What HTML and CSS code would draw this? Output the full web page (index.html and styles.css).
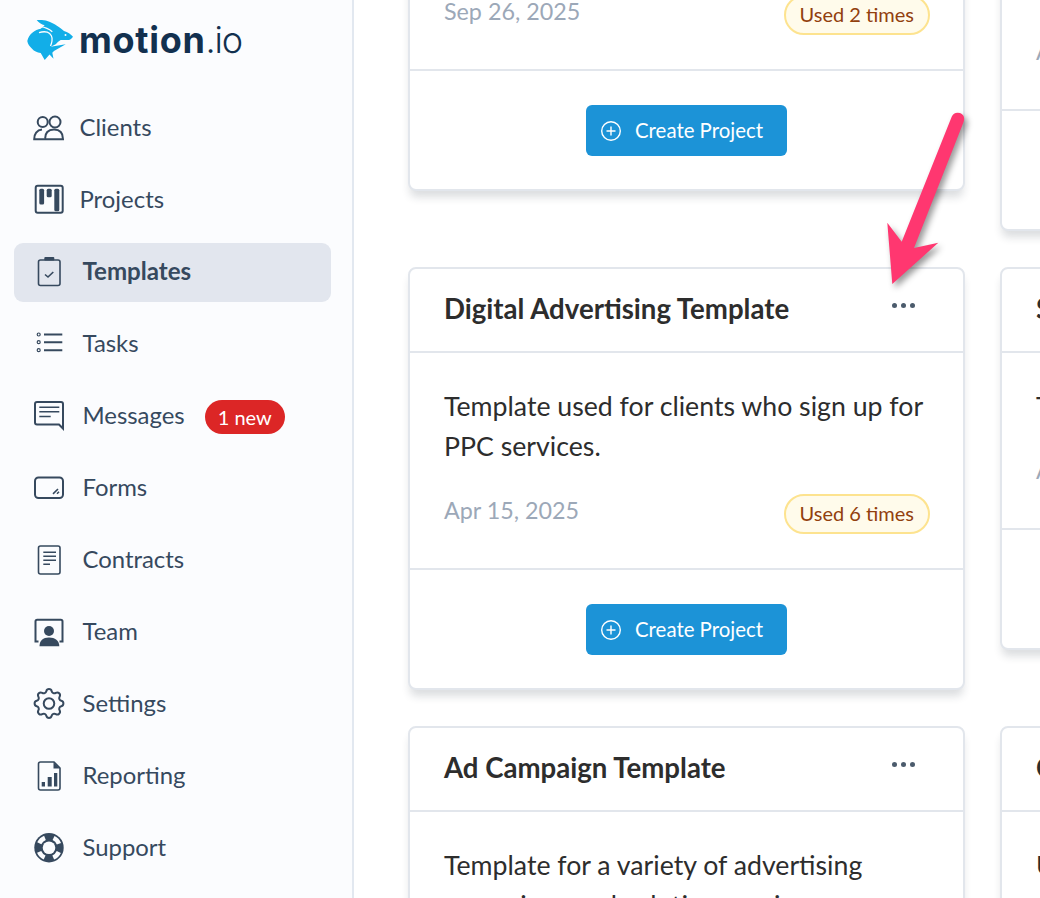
FILE: index.html
```html
<!DOCTYPE html>
<html lang="en">
<head>
    <meta charset="utf-8">
    <title>Templates</title>
    <link rel="stylesheet" href="styles.css">
</head>
<body>
<div class="app">
    <aside class="sidebar">
        <div class="logo">
            <svg class="logo-mark" width="47" height="41" viewBox="0 0 47 41">
                <path class="rabbit" d="M9.7 1C14 0.8 18 1 20.3 2C24 3 27.5 5 30.3 7C33 8.5 35 10.2 37 12C40.5 13 44 15.2 46 17.7C45 19.3 43.7 20.5 42 21L33.7 21C31.5 22 30 23.8 28.7 25.3L23.7 27.7L38.7 25.3L27 32L25.3 33.7L26.5 39.7L22.5 35.5L17.7 41L13.7 34C10 33.5 7 32 5.3 30C2.5 27.5 0.8 25 0.3 22C1 18.5 3 15.5 5.3 13.7C8 11.5 11 10.2 13.7 9.7L17.7 6.3C14.5 5.5 11.5 3.5 9.7 1Z"/>
                <path class="rabbit-line" d="M13.7 7.7C17.5 8.2 22 10 25.3 12.7"/>
                <path class="rabbit-line" d="M12 13.7C15 12.7 18 12.5 20.3 13.2C24 14.5 25.8 18.5 25 22C24.7 24 24.2 25.5 23.5 27"/>
                <circle class="rabbit-eye" cx="38.5" cy="16" r="1"/>
            </svg>
            <span class="logo-text">motion<span class="logo-io">.io</span></span>
        </div>
        <nav class="nav">
            <a class="nav-item nav-item-tight">
                <svg class="nav-icon" viewBox="0 0 30 30"><circle cx="8.7" cy="9" r="5"/><circle cx="21" cy="9" r="5.5"/><path d="M11 26.2H1.2C1 21 4 17 9 16.6M12 26.2C12 20 15.5 16.6 21 16.6S30 20 30 26.2Z" transform="translate(-1 0)"/></svg>
                <span>Clients</span>
            </a>
            <a class="nav-item nav-item-tight">
                <svg class="nav-icon" viewBox="0 0 30 30"><rect x="1.7" y="0.8" width="27" height="27" rx="2"/><rect class="solid" x="5.3" y="3.8" width="4.8" height="15.7" rx="1.5"/><rect class="solid" x="12.7" y="3.8" width="5" height="8.4" rx="1.5"/><rect class="solid" x="20.3" y="3.8" width="5" height="22.4" rx="1.5"/></svg>
                <span>Projects</span>
            </a>
            <a class="nav-item active">
                <svg class="nav-icon" viewBox="0 0 30 30"><rect class="thin" x="4.5" y="3" width="21.5" height="25.5" rx="2"/><rect class="solid" x="10.3" y="0" width="10" height="3.5" rx="1"/><path class="thin" d="M11 17.5L14 20L19.3 15"/></svg>
                <span>Templates</span>
            </a>
            <a class="nav-item">
                <svg class="nav-icon" viewBox="0 0 30 30"><circle class="hair" cx="4.7" cy="5.5" r="1.5"/><circle class="hair" cx="4.7" cy="13.2" r="1.5"/><circle class="hair" cx="4.7" cy="21.2" r="1.5"/><path d="M10 5.5H28.3M10 13.2H28.3M10 21.2H28.3"/></svg>
                <span>Tasks</span>
            </a>
            <a class="nav-item">
                <svg class="nav-icon" viewBox="0 0 30 30"><path d="M3 1H27Q29 1 29 3V27.5L25 23.5H3Q1 23.5 1 21.5V3Q1 1 3 1Z"/><path class="thin" d="M5.3 6.2H25.3M5.3 10.8H25.3M5.3 15.5H16.7"/></svg>
                <span>Messages</span>
                <span class="nav-badge">1 new</span>
            </a>
            <a class="nav-item">
                <svg class="nav-icon" viewBox="0 0 30 30"><rect x="1" y="4.5" width="28" height="20.5" rx="3.5"/><path class="thin" d="M19 20.8L24 16M23 20.8L25 18.8"/></svg>
                <span>Forms</span>
            </a>
            <a class="nav-item">
                <svg class="nav-icon" viewBox="0 0 30 30"><rect class="thin" x="4.5" y="1" width="21.5" height="28" rx="2"/><path class="thin" d="M9.3 7.2H22M9.3 11.2H22M9.3 15.2H22M9.3 19.2H16"/></svg>
                <span>Contracts</span>
            </a>
            <a class="nav-item">
                <svg class="nav-icon" viewBox="0 0 30 30"><path d="M4.5 24.5H1.5V4.5Q1.5 2.8 3.2 2.8H26.8Q28.5 2.8 28.5 4.5V24.5H25.5"/><circle class="solid" cx="15" cy="14" r="5"/><path class="solid" d="M5.5 29.2C5.5 24 9 20.6 15 20.6S25.3 24 25.3 29.2Z"/></svg>
                <span>Team</span>
            </a>
            <a class="nav-item">
                <svg class="nav-icon" viewBox="0 0 30 30"><g transform="translate(15 14.5) scale(1.6) translate(-12 -12)"><path class="gear" d="M10.325 4.317c.426-1.756 2.924-1.756 3.35 0a1.724 1.724 0 002.573 1.066c1.543-.94 3.31.826 2.37 2.37a1.724 1.724 0 001.065 2.572c1.756.426 1.756 2.924 0 3.35a1.724 1.724 0 00-1.066 2.573c.94 1.543-.826 3.31-2.37 2.37a1.724 1.724 0 00-2.572 1.065c-.426 1.756-2.924 1.756-3.35 0a1.724 1.724 0 00-2.573-1.066c-1.543.94-3.31-.826-2.37-2.37a1.724 1.724 0 00-1.065-2.572c-1.756-.426-1.756-2.924 0-3.35a1.724 1.724 0 001.066-2.573c-.94-1.543.826-3.31 2.37-2.37.996.608 2.296.07 2.572-1.065z"/><circle class="gear" cx="12" cy="12" r="3.3"/></g></svg>
                <span>Settings</span>
            </a>
            <a class="nav-item">
                <svg class="nav-icon" viewBox="0 0 30 30"><path class="thin" d="M6.5 1H20L26 7V27Q26 29 24 29H6.5Q4.5 29 4.5 27V3Q4.5 1 6.5 1Z"/><path class="solid" d="M19.5 1L26 7.5H19.5Z"/><rect class="solid" x="7.7" y="21" width="3.3" height="4.5"/><rect class="solid" x="13.7" y="16" width="4" height="9.5"/><rect class="solid" x="20" y="12" width="3.3" height="13.5"/></svg>
                <span>Reporting</span>
            </a>
            <a class="nav-item">
                <svg class="nav-icon" viewBox="0 0 30 30"><circle class="solid" cx="15" cy="14.7" r="14.7"/><circle class="cut" cx="15" cy="14.7" r="10.7" transform="rotate(23.6 15 14.7)"/><circle class="hole" cx="15" cy="14.7" r="6.3"/></svg>
                <span>Support</span>
            </a>
        </nav>
    </aside>

    <main class="main">
        <div class="card-grid">
            <div class="card">
                <div class="card-header"><h3>Client Onboarding Template</h3><span class="card-more"><i></i><i></i><i></i></span></div>
                <div class="card-body">
                    <p>Template used for onboarding new clients to your agency.</p>
                    <div class="card-meta"><span class="card-date">Sep 26, 2025</span><span class="used">Used 2 times</span></div>
                </div>
                <div class="card-footer"><a class="btn"><svg width="20" height="20" viewBox="0 0 20 20"><circle cx="10" cy="10" r="9.3"/><path d="M10 5.5V14.5M5.5 10H14.5"/></svg><span>Create Project</span></a></div>
            </div>
            <div class="card">
                <div class="card-header"><h3>Website Design Template</h3><span class="card-more"><i></i><i></i><i></i></span></div>
                <div class="card-body">
                    <p>Template used for clients who sign up for website design and development services and ongoing support.</p>
                    <div class="card-meta"><span class="card-date">Apr 15, 2025</span><span class="used">Used 3 times</span></div>
                </div>
                <div class="card-footer"><a class="btn"><svg width="20" height="20" viewBox="0 0 20 20"><circle cx="10" cy="10" r="9.3"/><path d="M10 5.5V14.5M5.5 10H14.5"/></svg><span>Create Project</span></a></div>
            </div>

            <div class="card">
                <div class="card-header"><h3>Digital Advertising Template</h3><span class="card-more"><i></i><i></i><i></i></span></div>
                <div class="card-body">
                    <p>Template used for clients who sign up for PPC services.</p>
                    <div class="card-meta"><span class="card-date">Apr 15, 2025</span><span class="used">Used 6 times</span></div>
                </div>
                <div class="card-footer"><a class="btn"><svg width="20" height="20" viewBox="0 0 20 20"><circle cx="10" cy="10" r="9.3"/><path d="M10 5.5V14.5M5.5 10H14.5"/></svg><span>Create Project</span></a></div>
            </div>
            <div class="card">
                <div class="card-header"><h3>SEO Services Template</h3><span class="card-more"><i></i><i></i><i></i></span></div>
                <div class="card-body">
                    <p>Template for new SEO clients.</p>
                    <div class="card-meta"><span class="card-date">Apr 15, 2025</span><span class="used">Used 4 times</span></div>
                </div>
                <div class="card-footer"><a class="btn"><svg width="20" height="20" viewBox="0 0 20 20"><circle cx="10" cy="10" r="9.3"/><path d="M10 5.5V14.5M5.5 10H14.5"/></svg><span>Create Project</span></a></div>
            </div>

            <div class="card">
                <div class="card-header"><h3>Ad Campaign Template</h3><span class="card-more"><i></i><i></i><i></i></span></div>
                <div class="card-body">
                    <p>Template for a variety of advertising campaigns and solution services.</p>
                </div>
            </div>
            <div class="card">
                <div class="card-header"><h3>Content Marketing Template</h3><span class="card-more"><i></i><i></i><i></i></span></div>
                <div class="card-body">
                    <p>Used for content marketing clients.</p>
                </div>
            </div>
        </div>
    </main>
</div>

<svg class="arrow" width="90" height="190" viewBox="0 0 90 190">
    <path d="M66.7 8.7L16.7 133.7L2.3 114.7L7.3 176L53.3 134.7L29 140L78.7 13.7Q80.5 7 75 5Q69 3.5 66.7 8.7Z"/>
</svg>
</body>
</html>
```

FILE: styles.css
```css
html, body {margin: 0; padding: 0; height: 100%; overflow: hidden;}
body {background: #fff; font-family: Lato, "Liberation Sans", sans-serif; color: #2d2d2d; position: relative;}

.app {display: flex; height: 898px; overflow: hidden;}

.sidebar {width: 352px; flex: none; background: #fbfcfe; border-right: 2px solid #e2e8f0;}
.logo {display: flex; align-items: center; height: 41px; margin: 19px 0 39px 27px; gap: 5px;}
.logo-text {font-family: Inter, sans-serif; font-size: 36px; font-weight: 700; letter-spacing: 0.7px; color: #12304f;}
.logo-io {font-weight: 300; letter-spacing: -1.2px;}
.rabbit {fill: #12aee8;}
.rabbit-line {fill: none; stroke: #fbfcfe; stroke-width: 1.3;}
.rabbit-eye {fill: #fbfcfe;}

.nav {display: flex; flex-direction: column; gap: 13px; padding: 0 21px 0 14px;}
.nav-item {display: flex; align-items: center; box-sizing: border-box; height: 59px; padding: 0 0 4px 20px; gap: 18.5px; border-radius: 9px; font-size: 23.9px; color: #36495e;}
.nav-item-tight {gap: 15.5px;}
.nav-item.active {background: #e2e6ee; font-weight: 700; font-size: 24.1px;}
.nav-icon {width: 30px; height: 30px; flex: none; margin-top: 2px; fill: none; stroke: #36495e; stroke-width: 2; overflow: visible;}
.nav-icon .solid {fill: #36495e; stroke: none;}
.nav-icon .thin {stroke-width: 1.6;}
.nav-icon .hair {stroke-width: 1.2;}
.nav-icon .gear {stroke-width: 1.25;}
.nav-icon .cut {stroke: #fbfcfe; stroke-width: 4.5; stroke-dasharray: 8 8.8;}
.nav-icon .hole {fill: #fbfcfe; stroke: none;}
.nav-badge {margin: 4px 0 0 1.5px; padding: 0 13px; height: 34px; line-height: 35px; border-radius: 17px; background: #dc2626; color: #fff; font-size: 20px;}

.main {flex: 1; min-width: 0; overflow: hidden; padding-left: 54px;}
.card-grid {display: grid; grid-template-columns: 557px 557px; gap: 36px 35px; align-items: start; margin-top: -232px;}
.card {background: #fff; border: 2px solid #e2e6ec; border-radius: 8px; box-shadow: 0 8px 8px -2px rgba(30, 41, 59, 0.16);}
.card-header {display: flex; align-items: flex-start; justify-content: space-between; height: 82px; padding: 0 48px 0 34px; border-bottom: 2px solid #e2e6ec;}
.card-header h3 {margin: 0; font-size: 27.6px; line-height: 79px; font-weight: 700; white-space: nowrap;}
.card-more {display: flex; gap: 4px; margin-top: 34px;}
.card-more i {width: 5px; height: 5px; border-radius: 50%; background: #4b5b6c;}
.card-body {padding: 33px 33px 34px 34px;}
.card-body p {margin: 0; font-size: 26.7px; line-height: 40px;}
.card-meta {display: flex; align-items: center; justify-content: space-between; margin-top: 28px;}
.card-date {font-size: 23.3px; color: #9ca8b8; margin-bottom: 8px;}
.used {box-sizing: border-box; height: 40px; line-height: 35px; padding: 0 14px; border: 2px solid #fde38f; border-radius: 20px; background: #fffbeb; color: #92400e; font-size: 20px;}
.card-footer {display: flex; justify-content: center; padding: 34px 0 33px; border-top: 2px solid #e2e6ec;}
.btn {display: flex; align-items: center; gap: 14px; height: 51px; padding: 0 24px 0 15px; border-radius: 6px; background: #1c93d7; color: #fff; font-size: 20.4px;}
.btn span {margin-bottom: 2px;}
.btn svg {fill: none; stroke: #fff; stroke-width: 1.4;}

.arrow {position: absolute; left: 885px; top: 108px; filter: drop-shadow(3px 4px 3px rgba(0, 0, 0, 0.4));}
.arrow path {fill: #ff3770;}
```
